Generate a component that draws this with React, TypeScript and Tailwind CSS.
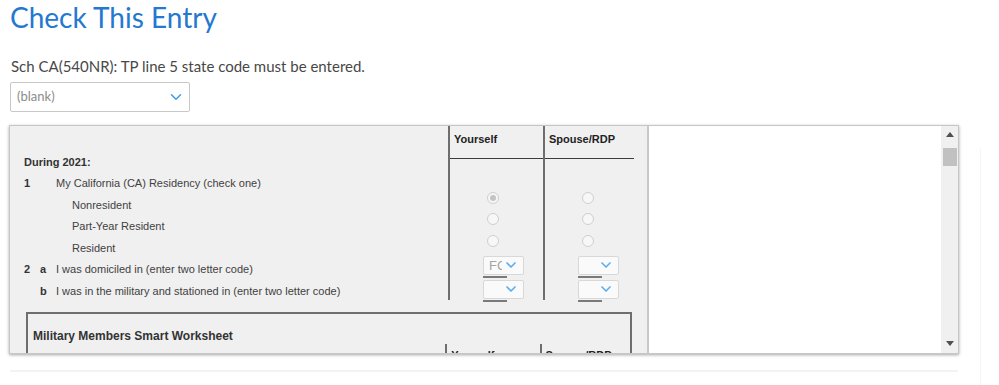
import { ChevronDown } from "lucide-react"

const formFont = "font-['Liberation_Sans',Arial,sans-serif]"

function Radio({ checked }: { checked?: boolean }) {
  return (
    <div className="h-[21.5px] flex items-center pl-[37px]">
      <span className="w-[12px] h-[12px] rounded-full border border-[#cfcfcf] bg-[#f7f7f7] flex items-center justify-center">
        {checked && <span className="w-[6px] h-[6px] rounded-full bg-[#c4c4c4]" />}
      </span>
    </div>
  )
}

function MiniSelect({ value }: { value?: string }) {
  return (
    <div className="pl-[33px] pb-[2px]">
      <div className="w-[41px] h-[19px] rounded-[2px] border border-[#d8d8d8] bg-[#fafafa] flex items-center justify-between pl-[5px] pr-[4px]">
        <span className="w-[13px] overflow-hidden whitespace-nowrap text-[13px] text-[#a5a5a5] leading-none">{value}</span>
        <ChevronDown size={16} strokeWidth={2.5} className="text-[#5aaef2]" />
      </div>
      <div className="w-[24px] h-[2px] bg-[#7a7a7a] mt-[1px]" />
    </div>
  )
}

function Line({ num, letter, indent, children }: { num?: string; letter?: string; indent?: boolean; children: React.ReactNode }) {
  return (
    <div className="h-[21.5px] flex items-center">
      <span className="w-[16px] pl-[14px] font-bold text-[#333]">{num}</span>
      <span className="w-[30px] pl-[14px] font-bold text-[#333]">{letter}</span>
      <span className={`${indent ? "pl-[16px]" : ""} whitespace-nowrap`}>{children}</span>
    </div>
  )
}

export default function App() {
  return (
    <div className="w-[999px] h-[385px] bg-white overflow-hidden flex">
      <div className="w-[980px] shrink-0">
        <h1 className="pl-[10px] pt-[1px] h-[40px] text-[28px] leading-[32px] text-[#2478d0] font-['Lato',sans-serif]">
          Check This Entry
        </h1>
        <p className="pl-[11px] mt-[16px] text-[15px] leading-[20px] text-[#484848] font-['Lato',sans-serif]">
          Sch CA(540NR): TP line 5 state code must be entered.
        </p>
        <div className="ml-[10px] mt-[6px] w-[180px] h-[30px] rounded-[2px] border border-[#c9c9c9] flex items-center justify-between pl-[6px] pr-[4px] font-['Lato',sans-serif] text-[13px] text-[#8c8c8c]">
          <span>(blank)</span>
          <ChevronDown size={18} strokeWidth={2} className="text-[#3d9ce8]" />
        </div>

        <div className={`ml-[9px] mt-[13px] w-[950px] h-[229px] border border-[#c6c6c6] shadow-[0_1px_3px_rgba(0,0,0,0.35)] flex overflow-hidden ${formFont} text-[11px] text-[#3f3f3f]`}>
          <div className="w-[637px] shrink-0 bg-[#f0f0f0] flex flex-col">
            <div className="flex h-[174px] shrink-0">
              <div className="w-[438px] pt-[25px]">
                <div className="h-[21.5px] flex items-center pl-[14px] font-bold text-[#333]">During 2021:</div>
                <Line num="1">My California (CA) Residency (check one)</Line>
                <Line indent>Nonresident</Line>
                <Line indent>Part-Year Resident</Line>
                <Line indent>Resident</Line>
                <Line num="2" letter="a">I was domiciled in (enter two letter code)</Line>
                <Line letter="b">I was in the military and stationed in (enter two letter code)</Line>
              </div>
              <div className="w-[95px] border-l-2 border-[#6e6e6e]">
                <div className="h-[33px] border-b border-[#3c3c3c] pl-[4px] pt-[5px] font-bold text-[11px] text-[#222]">Yourself</div>
                <div className="pt-[28px]">
                  <Radio checked />
                  <Radio />
                  <Radio />
                </div>
                <div className="pt-[4px]">
                  <MiniSelect value="FC" />
                  <MiniSelect />
                </div>
              </div>
              <div className="w-[91px] border-l-2 border-[#6e6e6e]">
                <div className="h-[33px] border-b border-[#3c3c3c] pl-[4px] pt-[5px] font-bold text-[11px] text-[#222]">Spouse/RDP</div>
                <div className="pt-[28px]">
                  <Radio />
                  <Radio />
                  <Radio />
                </div>
                <div className="pt-[4px]">
                  <MiniSelect />
                  <MiniSelect />
                </div>
              </div>
            </div>
            <div className="ml-[16px] mt-[12px] w-[606px] h-[60px] border-2 border-b-0 border-[#6e6e6e] pl-[5px]">
              <div className="pt-[13px] h-[30px] font-bold text-[12px] text-[#333]">Military Members Smart Worksheet</div>
              <div className="flex h-[30px]">
                <div className="w-[415px]" />
                <div className="w-[95px] border-l-2 border-[#6e6e6e] pl-[4px] pt-[6px] leading-none font-bold text-[11px] text-[#222]">Yourself</div>
                <div className="w-[91px] border-l-2 border-[#6e6e6e] pl-[4px] pt-[6px] leading-none font-bold text-[11px] text-[#222]">Spouse/RDP</div>
              </div>
            </div>
          </div>
          <div className="flex-1 bg-white border-l-2 border-[#c8c8c8]" />
          <div className="w-[17px] shrink-0 bg-[#f0f0f0] flex flex-col items-center">
            <div className="pt-[6px] h-[22px]">
              <div className="w-0 h-0 border-x-[4px] border-x-transparent border-b-[5px] border-b-[#505050]" />
            </div>
            <div className="w-[14px] h-[18px] bg-[#c1c1c1]" />
            <div className="flex-1" />
            <div className="pb-[7px]">
              <div className="w-0 h-0 border-x-[4px] border-x-transparent border-t-[5px] border-t-[#505050]" />
            </div>
          </div>
        </div>

        <div className="ml-[10px] mt-[16px] w-[948px] h-[2px] bg-[#f3f3f3]" />
      </div>
      <div className="mt-[148px] border-l border-[#f5f5f5]" />
    </div>
  )
}
